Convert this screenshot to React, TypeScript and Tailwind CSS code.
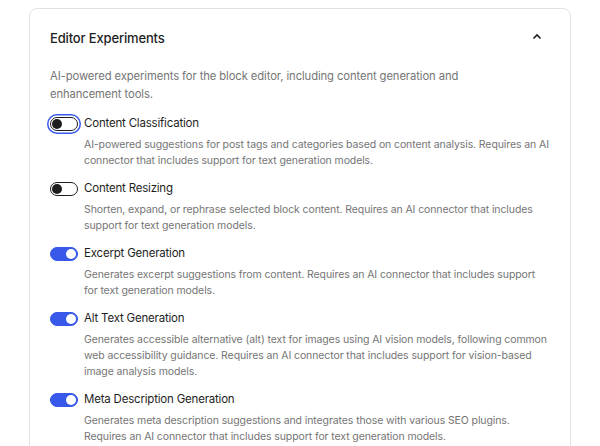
import React from 'react';

type Experiment = {
  title: string;
  lines: string[];
  enabled: boolean;
  focused?: boolean;
};

const experiments: Experiment[] = [
  {
    title: 'Content Classification',
    lines: [
      'AI-powered suggestions for post tags and categories based on content analysis. Requires an AI',
      'connector that includes support for text generation models.',
    ],
    enabled: false,
    focused: true,
  },
  {
    title: 'Content Resizing',
    lines: [
      'Shorten, expand, or rephrase selected block content. Requires an AI connector that includes',
      'support for text generation models.',
    ],
    enabled: false,
  },
  {
    title: 'Excerpt Generation',
    lines: [
      'Generates excerpt suggestions from content. Requires an AI connector that includes support',
      'for text generation models.',
    ],
    enabled: true,
  },
  {
    title: 'Alt Text Generation',
    lines: [
      'Generates accessible alternative (alt) text for images using AI vision models, following common',
      'web accessibility guidance. Requires an AI connector that includes support for vision-based',
      'image analysis models.',
    ],
    enabled: true,
  },
  {
    title: 'Meta Description Generation',
    lines: [
      'Generates meta description suggestions and integrates those with various SEO plugins.',
      'Requires an AI connector that includes support for text generation models.',
    ],
    enabled: true,
  },
];

const Toggle: React.FC<{ on: boolean; focused?: boolean }> = ({ on, focused }) => (
  <span
    className={`relative inline-flex items-center w-[28px] h-[14px] rounded-full shrink-0 ${
      on ? 'bg-[#3858e9] border border-[#3858e9]' : 'bg-white border border-[#1e1e1e]'
    } ${focused ? 'shadow-[0_0_0_1.5px_white,0_0_0_3px_#3858e9]' : ''}`}
  >
    <span
      className={`absolute top-[1px] w-[10px] h-[10px] rounded-full ${
        on ? 'left-[15px] bg-white' : 'left-[1px] bg-[#1e1e1e]'
      }`}
    />
  </span>
);

const App: React.FC = () => {
  return (
    <div className="bg-white min-h-[446px] pt-[8px] font-['Inter',sans-serif] text-[#1e1e1e]">
      <div className="mx-[29px] border border-[#e2e2e2] rounded-[8px] bg-white pb-6">
        <div className="flex items-center justify-between h-[59px] px-[20px]">
          <h2 className="text-[13px] font-medium tracking-[-0.15px]">Editor Experiments</h2>
          <svg width="16" height="16" viewBox="0 0 16 16" className="mr-[5px] -mt-[4px]">
            <path d="M4.5 9.5 L8 6 L11.5 9.5" fill="none" stroke="#1e1e1e" strokeWidth="1.6" />
          </svg>
        </div>
        <div className="px-[20px]">
          <p className="-mt-[1px] text-[11.25px] leading-[18px] tracking-[-0.1px] text-[#757575] whitespace-nowrap">
            AI-powered experiments for the block editor, including content generation and
            <br />
            enhancement tools.
          </p>
          <div className="mt-[12px] flex flex-col gap-[11px]">
            {experiments.map((exp) => (
              <div key={exp.title}>
                <div className="flex items-center h-[18px] gap-[6px]">
                  <Toggle on={exp.enabled} focused={exp.focused} />
                  <span className="text-[11.5px] tracking-[-0.2px]">{exp.title}</span>
                </div>
                <div className="mt-[4px] ml-[34px] text-[10.5px] leading-[16px] tracking-[-0.1px] text-[#757575] whitespace-nowrap">
                  {exp.lines.map((line) => (
                    <div key={line}>{line}</div>
                  ))}
                </div>
              </div>
            ))}
          </div>
        </div>
      </div>
    </div>
  );
};

export default App;
